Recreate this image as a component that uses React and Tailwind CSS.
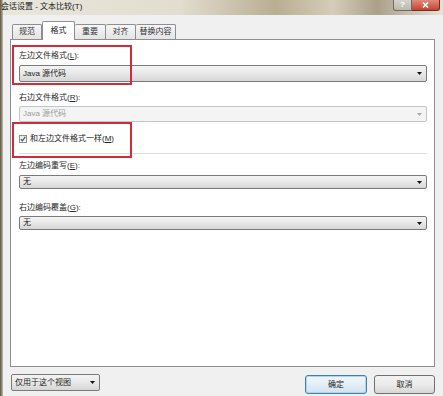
import React from 'react';

const Arrow = ({ disabled }) => (
    <svg width="5" height="3" viewBox="0 0 5 3" className="shrink-0">
        <path d="M0 0H5L2.5 3Z" fill={disabled ? '#a8a8a8' : '#111'} />
    </svg>
);

const Select = ({ value, h, disabled }) => (
    <div
        className={`flex items-center justify-between pl-[3px] pr-[4px] border rounded-[2px] ${h} ${
            disabled
                ? 'border-[#c3c6c9] bg-[#f4f4f4] text-[#9c9c9c]'
                : 'border-[#7a7a7a] bg-[linear-gradient(to_bottom,#f4f4f4,#e8e8e8_50%,#d6d6d6)] text-[#1c1c1c]'
        }`}
    >
        <span className="leading-none">{value}</span>
        <Arrow disabled={disabled} />
    </div>
);

const Label = ({ text, k, mt }) => (
    <div className={`h-[10px] leading-[10px] text-[#2a2a2a] ${mt}`}>
        {text}(<span className="underline">{k}</span>):
    </div>
);

const tabs = [
    { name: '规范', w: 'w-[30px]' },
    { name: '格式', w: 'w-[33px]', active: true },
    { name: '重要', w: 'w-[31px]' },
    { name: '对齐', w: 'w-[30px]' },
    { name: '替换内容', w: 'w-[40px]' },
];

export default function App() {
    return (
        <div className="w-[443px] h-[396px] flex bg-[#f0f0f0] overflow-hidden text-[8px] font-[Liberation_Sans,Noto_Sans_CJK_SC,sans-serif]">
            {/* left window frame */}
            <div className="w-[3px] bg-[linear-gradient(to_right,#5e5644,#8a8270,#c9c4b4)]" />

            <div className="flex-1 flex flex-col">
                {/* title bar */}
                <div className="relative h-[15px] flex items-start bg-[linear-gradient(to_right,#e9e6dc,#e2ddd0_40%,#b9ae92_62%,#d5cdb9_75%,#aba08a_85%,#e6e2d8)]">
                    <span className="mt-[3px] ml-[-2px] leading-none text-[#1a1a1a]">会话设置 - 文本比较(T)</span>
                    <div className="absolute right-[3px] top-0 flex">
                        <div className="w-[19px] h-[11px] flex items-center justify-center border border-t-0 border-[#6d6a64] rounded-bl-[3px] bg-[linear-gradient(to_bottom,#d6d3cc,#bcb8ae)] text-white text-[8px] font-bold leading-none">
                            ?
                        </div>
                        <div className="w-[28px] h-[11px] flex items-center justify-center border border-t-0 border-l-0 border-[#6b2f2a] rounded-br-[3px] bg-[linear-gradient(to_bottom,#e08a7c,#c7432f)]">
                            <svg width="7" height="6" viewBox="0 0 7 6">
                                <path d="M1 0.5L6 5.5M6 0.5L1 5.5" stroke="#fff" strokeWidth="1.6" />
                            </svg>
                        </div>
                    </div>
                </div>

                <div className="flex-1 flex flex-col pl-[7px] pr-[8px]">
                    {/* tabs */}
                    <div className="flex items-end h-[24px] pl-[2px] relative z-10">
                        {tabs.map((t) =>
                            t.active ? (
                                <div
                                    key={t.name}
                                    className={`${t.w} h-[19px] -mb-px flex items-start justify-center pt-[3px] bg-white border border-b-0 border-[#8c8e94] rounded-t-[2px] text-[#222]`}
                                >
                                    {t.name}
                                </div>
                            ) : (
                                <div
                                    key={t.name}
                                    className={`${t.w} h-[15px] flex items-center justify-center bg-[linear-gradient(to_bottom,#f6f6f6,#e4e4e4)] border border-b-0 border-l-0 first:border-l border-[#8c8e94] rounded-t-[2px] text-[#333]`}
                                >
                                    {t.name}
                                </div>
                            )
                        )}
                    </div>

                    {/* panel */}
                    <div className="relative h-[328px] bg-white border border-[#8c8e94] flex flex-col pl-[8px] pr-[7px]">
                        <Label text="左边文件格式" k="L" mt="mt-[11px]" />
                        <div className="mt-[4px]">
                            <Select value="Java 源代码" h="h-[17px]" />
                        </div>
                        <Label text="右边文件格式" k="R" mt="mt-[11px]" />
                        <div className="mt-[3px]">
                            <Select value="Java 源代码" h="h-[16px]" disabled />
                        </div>
                        <div className="mt-[12px] h-[10px] flex items-center gap-[3px] text-[#222]">
                            <div className="w-[8px] h-[8px] border border-[#8e8f8f] bg-[linear-gradient(to_bottom,#e6e6e6,#fafafa)] flex items-center justify-center">
                                <svg width="6" height="6" viewBox="0 0 6 6">
                                    <path d="M0.8 3.2L2.4 4.8L5.3 0.8" fill="none" stroke="#4a5d7a" strokeWidth="1.3" />
                                </svg>
                            </div>
                            <span className="leading-none">
                                和左边文件格式一样(<span className="underline">M</span>)
                            </span>
                        </div>
                        <div className="mt-[9px] h-px bg-[#dcdcdc]" />
                        <Label text="左边编码重写" k="E" mt="mt-[7px]" />
                        <div className="mt-[4px]">
                            <Select value="无" h="h-[14px]" />
                        </div>
                        <Label text="右边编码覆盖" k="G" mt="mt-[14px]" />
                        <div className="mt-[3px]">
                            <Select value="无" h="h-[14px]" />
                        </div>

                        {/* red annotation boxes */}
                        <div className="absolute left-[1px] top-[5px] w-[120px] h-[40px] border-2 border-[#d42a3a]" />
                        <div className="absolute left-[1px] top-[82px] w-[120px] h-[36px] border-2 border-[#d42a3a]" />
                    </div>

                    {/* bottom row */}
                    <div className="mt-[7px] flex items-start">
                        <div className="ml-[1px] w-[89px] h-[17px] flex items-center justify-between pl-[3px] pr-[4px] border border-[#7a7a7a] rounded-[2px] bg-[linear-gradient(to_bottom,#f4f4f4,#e8e8e8_50%,#d6d6d6)] text-[#1c1c1c]">
                            <span className="leading-none">仅用于这个视图</span>
                            <Arrow />
                        </div>
                        <div className="ml-auto flex gap-[7px] mt-[1px]">
                            <div className="w-[62px] h-[19px] flex items-center justify-center border border-[#3c7fb1] rounded-[3px] bg-[linear-gradient(to_bottom,#f2f8fc,#e3eef6_50%,#d2e2ee)] shadow-[inset_0_0_0_1px_#a8d8f4] text-[#1c1c1c]">
                                确定
                            </div>
                            <div className="w-[61px] h-[19px] flex items-center justify-center border border-[#707070] rounded-[3px] bg-[linear-gradient(to_bottom,#f2f2f2,#ebebeb_50%,#d6d6d6)] text-[#1c1c1c]">
                                取消
                            </div>
                        </div>
                    </div>
                </div>
            </div>
        </div>
    );
}
